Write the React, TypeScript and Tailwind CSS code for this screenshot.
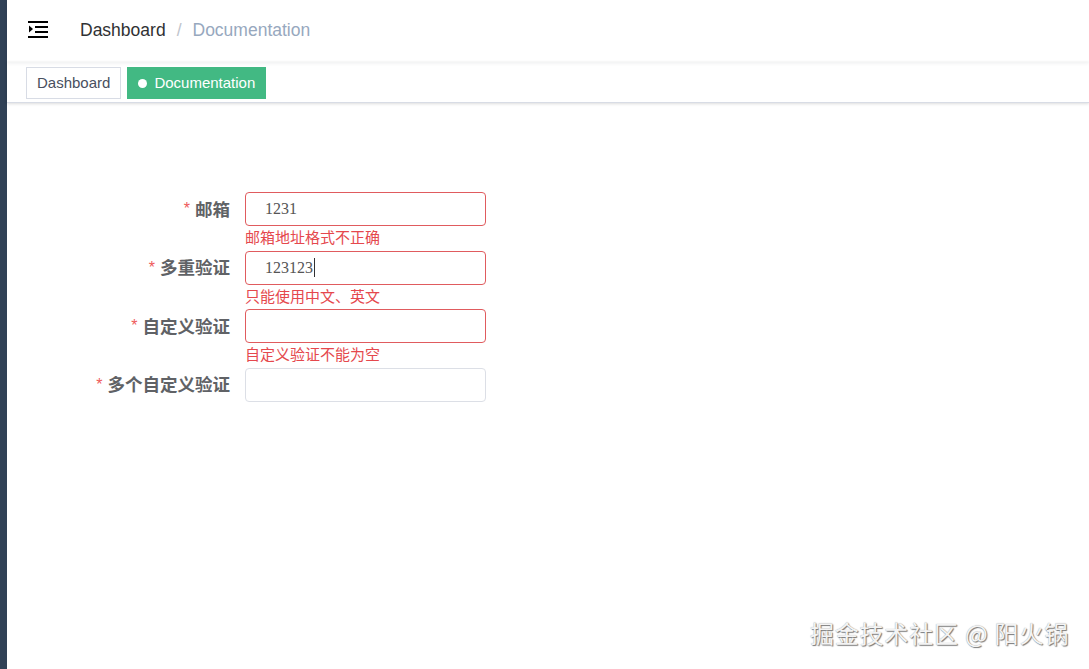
import React from "react";

const font = { fontFamily: '"Liberation Sans", Arial, "Noto Sans CJK SC", sans-serif' };

function Row({ label, value, error, caret }: { label: string; value?: string; error?: string; caret?: boolean }) {
  return (
    <div className="flex h-[58.5px]">
      <div className="w-[238px] pr-[15px] h-[34px] flex items-center justify-end text-[17.5px] font-bold text-[#606266]" style={{ fontFamily: '"Noto Sans CJK SC", sans-serif' }}>
        <span className="text-[#ee5a5a] mr-[5px] font-normal text-[16px]" style={{ fontFamily: '"Liberation Sans", sans-serif' }}>*</span>
        {label}
      </div>
      <div className="w-[241px]">
        <div className={`h-[34px] rounded-[4px] border bg-white flex items-center pl-[19px] text-[16px] text-[#555] ${error ? "border-[#e05b5e]" : "border-[#dcdfe6]"}`} style={{ fontFamily: '"Liberation Serif", "DejaVu Serif", serif' }}>
          {value}
          {caret && <span className="inline-block w-px h-[19px] bg-[#303133] ml-px" />}
        </div>
        {error && (
          <div className="text-[15px] leading-[20px] text-[#e5484d] mt-px" style={{ fontFamily: '"Noto Sans CJK SC", sans-serif' }}>
            {error}
          </div>
        )}
      </div>
    </div>
  );
}

export default function App() {
  return (
    <div className="flex w-[1089px] h-[669px] overflow-hidden bg-white relative" style={font}>
      <div className="w-[7px] shrink-0 bg-[#304156]" />
      <div className="flex-1 flex flex-col">
        <div className="h-[62px] flex items-center shadow-[0_1px_4px_rgba(0,21,41,0.08)] relative z-10">
          <div className="ml-[21px] w-[20px] h-[18px] -mt-[4px]">
            <svg width="20" height="18" viewBox="0 0 20 18">
              <rect x="0" y="1" width="20" height="2" fill="#000" />
              <rect x="7" y="6" width="13" height="2" fill="#000" />
              <rect x="7" y="11" width="13" height="2" fill="#000" />
              <rect x="0" y="16" width="20" height="2" fill="#000" />
              <path d="M1 5.5 L5 9 L1 12.5 Z" fill="#000" />
            </svg>
          </div>
          <div className="ml-[32px] text-[17.5px] flex items-center -mt-[2px]">
            <span className="text-[#303133]">Dashboard</span>
            <span className="text-[#c0c4cc] mx-[11px]">/</span>
            <span className="text-[#97a8be]">Documentation</span>
          </div>
        </div>
        <div className="h-[41px] flex items-start pt-[5px] pl-[19px] gap-[6px] border-b border-[#d8dce5] shadow-[0_1px_3px_0_rgba(0,0,0,0.12),0_0_3px_0_rgba(0,0,0,0.04)]">
          <div className="h-[32px] px-[10px] border border-[#d8dce5] bg-white text-[#495060] text-[15px] flex items-center">Dashboard</div>
          <div className="h-[32px] px-[10px] bg-[#42b983] border border-[#42b983] text-white text-[15px] flex items-center">
            <span className="w-[9px] h-[9px] rounded-full bg-white mr-[7px]" />
            Documentation
          </div>
        </div>
        <div className="pt-[89px]">
          <Row label="邮箱" value="1231" error="邮箱地址格式不正确" />
          <Row label="多重验证" value="123123" error="只能使用中文、英文" caret />
          <Row label="自定义验证" error="自定义验证不能为空" />
          <Row label="多个自定义验证" />
        </div>
      </div>
      <div
        className="absolute right-[20px] bottom-[18px] text-[24px] text-[#f4f4f4] tracking-[0.8px]"
        style={{ fontFamily: '"Noto Sans CJK SC", sans-serif', textShadow: "1px 1px 1px #777, 0 0 1px #999" }}
      >
        掘金技术社区 @ 阳火锅
      </div>
    </div>
  );
}
